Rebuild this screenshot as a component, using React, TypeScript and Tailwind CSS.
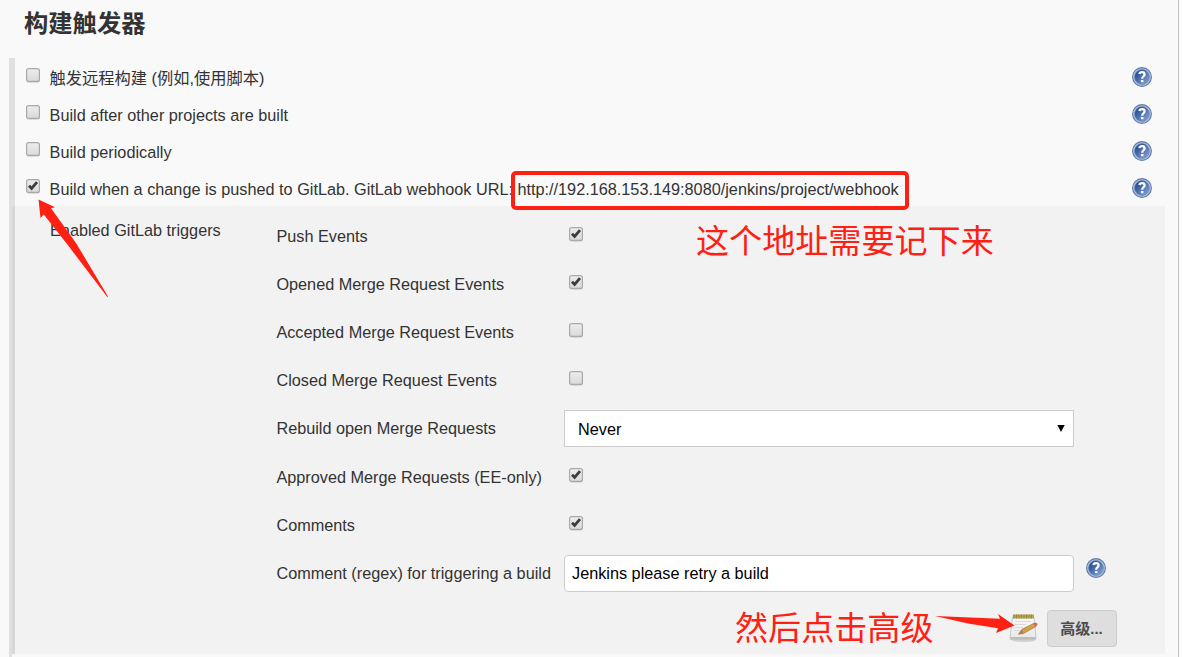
import React from 'react';

const sans = "font-['Liberation_Sans','Noto_Sans_CJK_SC',sans-serif]";

function Check({ on = false }: { on?: boolean }) {
  return (
    <svg className="block h-[15px] w-[14px] shrink-0" viewBox="0 0 14 15">
      <defs>
        <linearGradient id="box" x1="0" y1="0" x2="0" y2="1">
          <stop offset="0" stopColor="#ededed" />
          <stop offset="1" stopColor="#dadada" />
        </linearGradient>
      </defs>
      <rect x="0.5" y="1.5" width="13" height="13" rx="2" fill="none" stroke="#dcdcdc" />
      <rect x="0.6" y="0.6" width="12.8" height="12.8" rx="2" fill="url(#box)" stroke="#a9a9a9" strokeWidth="1.2" />
      {on && <path d="M3 6.8 L5.6 9.4 L11 3.2" fill="none" stroke="#3c3c3c" strokeWidth="2.8" />}
    </svg>
  );
}

function Help() {
  return (
    <svg className="block size-5 shrink-0" viewBox="0 0 20 20">
      <defs>
        <linearGradient id="disc" x1="0" y1="0" x2="1" y2="1">
          <stop offset="0.25" stopColor="#315598" />
          <stop offset="1" stopColor="#8fabd8" />
        </linearGradient>
      </defs>
      <circle cx="10" cy="10" r="9.4" fill="#b4c3de" stroke="#5f7aaa" strokeWidth="1.1" />
      <circle cx="10" cy="10" r="7.5" fill="url(#disc)" stroke="#6c8abf" strokeWidth="0.6" />
      <path d="M7.4 7 C7.7 4.4 12.6 4.3 12.6 7.2 C12.6 9.2 10.2 9.3 10.2 11.7" fill="none" stroke="#fff" strokeWidth="2.3" />
      <rect x="8.9" y="12.9" width="2.6" height="2.4" rx="0.6" fill="#fff" />
    </svg>
  );
}

function Notepad() {
  return (
    <svg className="block h-[30px] w-[30px] shrink-0" viewBox="0 0 30 30">
      <defs>
        <linearGradient id="paper" x1="0" y1="0" x2="0" y2="1">
          <stop offset="0" stopColor="#fafafa" />
          <stop offset="1" stopColor="#e6e7e6" />
        </linearGradient>
      </defs>
      <ellipse cx="14.5" cy="27.4" rx="11.5" ry="1.6" fill="#d0d0d0" />
      <path d="M3.5 4 H25 L27 25.5 Q27 26.5 26 26.5 H2 Q1 26.5 1 25.5 Z" fill="url(#paper)" stroke="#c6c8c5" />
      <path d="M1.3 24 H26.8 V26.2 H1.3Z" fill="#bcbebb" />
      <rect x="4" y="1.5" width="21" height="4" fill="#b5a64a" />
      <path d="M5 1.5v4M7.5 1.5v4M10 1.5v4M12.5 1.5v4M15 1.5v4M17.5 1.5v4M20 1.5v4M22.5 1.5v4" stroke="#948639" strokeWidth="0.9" />
      <path d="M6 8.5H22M6 11.5H17M6 14.5H14M5 17.5H11" stroke="#d9dad9" />
      <path d="M9.5 21.2 L13 16.3 L25 10.2 L27 13.4 L14.5 20.6 Z" fill="#d39f48" stroke="#9a7132" strokeWidth="0.6" />
      <path d="M9.5 21.2 L13 16.3 L14.5 20.6Z" fill="#a98350" />
      <path d="M24 10.8 L26.3 9.6 Q28.8 9.8 28.6 12.1 L26.3 13.7Z" fill="#d46b5c" />
    </svg>
  );
}

function TriggerRow({ label, on, children }: { label: string; on?: boolean; children?: React.ReactNode }) {
  return (
    <div className="flex h-[37px] items-start">
      <div className="mt-[10px] ml-[11px]"><Check on={on} /></div>
      <div className="ml-[9.6px] flex h-[37px] flex-1 items-center pt-[4px] whitespace-nowrap">
        <span>{label}</span>
        {children}
      </div>
      <div className="mt-[9px] mr-[26px]"><Help /></div>
    </div>
  );
}

function EventRow({ label, on }: { label: string; on?: boolean }) {
  return (
    <div className="flex h-12 items-start">
      <div className="flex h-12 w-[293px] items-center pl-[0.4px]">{label}</div>
      <div className="mt-[15px]"><Check on={on} /></div>
    </div>
  );
}

export default function App() {
  return (
    <div className={`relative flex h-[657px] w-[1182px] overflow-hidden bg-[#fbfbfb] text-[16.25px] text-[#333] ${sans}`}>
      <div className="flex w-[1179px] shrink-0 flex-col border-r border-[#c4c4c4] bg-[#f9f9f9] pl-[9px]">
        <h1 className="h-[58px] pt-[5px] pl-[15px] text-[24.3px] leading-[37px] font-bold">构建触发器</h1>
        <div className="h-[148px] border-l-6 border-[#e0e0e0]">
          <TriggerRow label="触发远程构建 (例如,使用脚本)" />
          <TriggerRow label="Build after other projects are built" />
          <TriggerRow label="Build periodically" />
          <TriggerRow label="Build when a change is pushed to GitLab. GitLab webhook URL:" on>
            <span className="ml-[4.4px]">http://192.168.153.149:8080/jenkins/project/webhook</span>
          </TriggerRow>
        </div>
        <div className="flex h-[451px] border-l-3 border-[#e0e0e0]">
          <div className="flex h-[448px] w-[1153px] border-l-3 border-[#d8d8d8] bg-[#f2f2f2]">
            <div className="w-[261px] shrink-0 pt-3 pl-[35px] leading-[24px]">Enabled GitLab triggers</div>
            <div className="flex flex-1 flex-col pt-[6px]">
              <EventRow label="Push Events" on />
              <EventRow label="Opened Merge Request Events" on />
              <EventRow label="Accepted Merge Request Events" />
              <EventRow label="Closed Merge Request Events" />
              <div className="flex h-[49px] items-start">
                <div className="flex h-12 w-[288px] items-center pl-[0.4px]">Rebuild open Merge Requests</div>
                <div className="mt-[6px] flex h-[37px] w-[510px] items-center justify-between border border-[#ccc] bg-white pt-px pr-2 pl-[13px] text-black">
                  <span>Never</span>
                  <svg className="mb-[2px] h-[7px] w-[8px]" viewBox="0 0 8 7"><path d="M0.3 0H7.7L4 7Z" /></svg>
                </div>
              </div>
              <EventRow label="Approved Merge Requests (EE-only)" on />
              <EventRow label="Comments" on />
              <div className="flex h-12 items-start">
                <div className="flex h-12 w-[288px] items-center pl-[0.4px]">Comment (regex) for triggering a build</div>
                <div className="mt-[6px] flex h-[37px] w-[510px] items-center rounded-[4px] border border-[#ccc] bg-white pl-[7px] text-black">Jenkins please retry a build</div>
                <div className="mt-[9px] ml-3"><Help /></div>
              </div>
              <div className="mt-[13px] flex h-[37px] justify-end pr-[48px]">
                <div className="mt-[3px] mr-[8px]"><Notepad /></div>
                <button className="h-[37px] w-[70px] rounded-[4px] border border-[#ccc] bg-[#dedede] pt-[2px] pr-px text-[15px] font-bold text-[#4d4d4d]">高级...</button>
              </div>
            </div>
          </div>
        </div>
      </div>

      <div className="absolute top-[171px] left-[511px] h-[39px] w-[398px] rounded-[5px] border-4 border-[#ff2014]" />
      <div className="absolute top-[218px] left-[696px] text-[33.1px] leading-[48px] whitespace-nowrap text-[#ff2014]">这个地址需要记下来</div>
      <div className="absolute top-[605px] left-[735px] text-[33.1px] leading-[48px] whitespace-nowrap text-[#ff2014]">然后点击高级</div>
      <svg className="pointer-events-none absolute inset-0 h-[657px] w-[1182px]" viewBox="0 0 1182 657" fill="#ff2014">
        <path d="M38.5 199.5 L55 207.3 L51 208.3 L76 243 L108 296.5 L107.3 297 L67 244 L43.8 214.5 L40.5 218 Z" />
        <path d="M935 616 L1000 618.7 L998 614 L1014.5 625.5 L996 633 L998 628.3 L968 623.5 Z" />
      </svg>
    </div>
  );
}
